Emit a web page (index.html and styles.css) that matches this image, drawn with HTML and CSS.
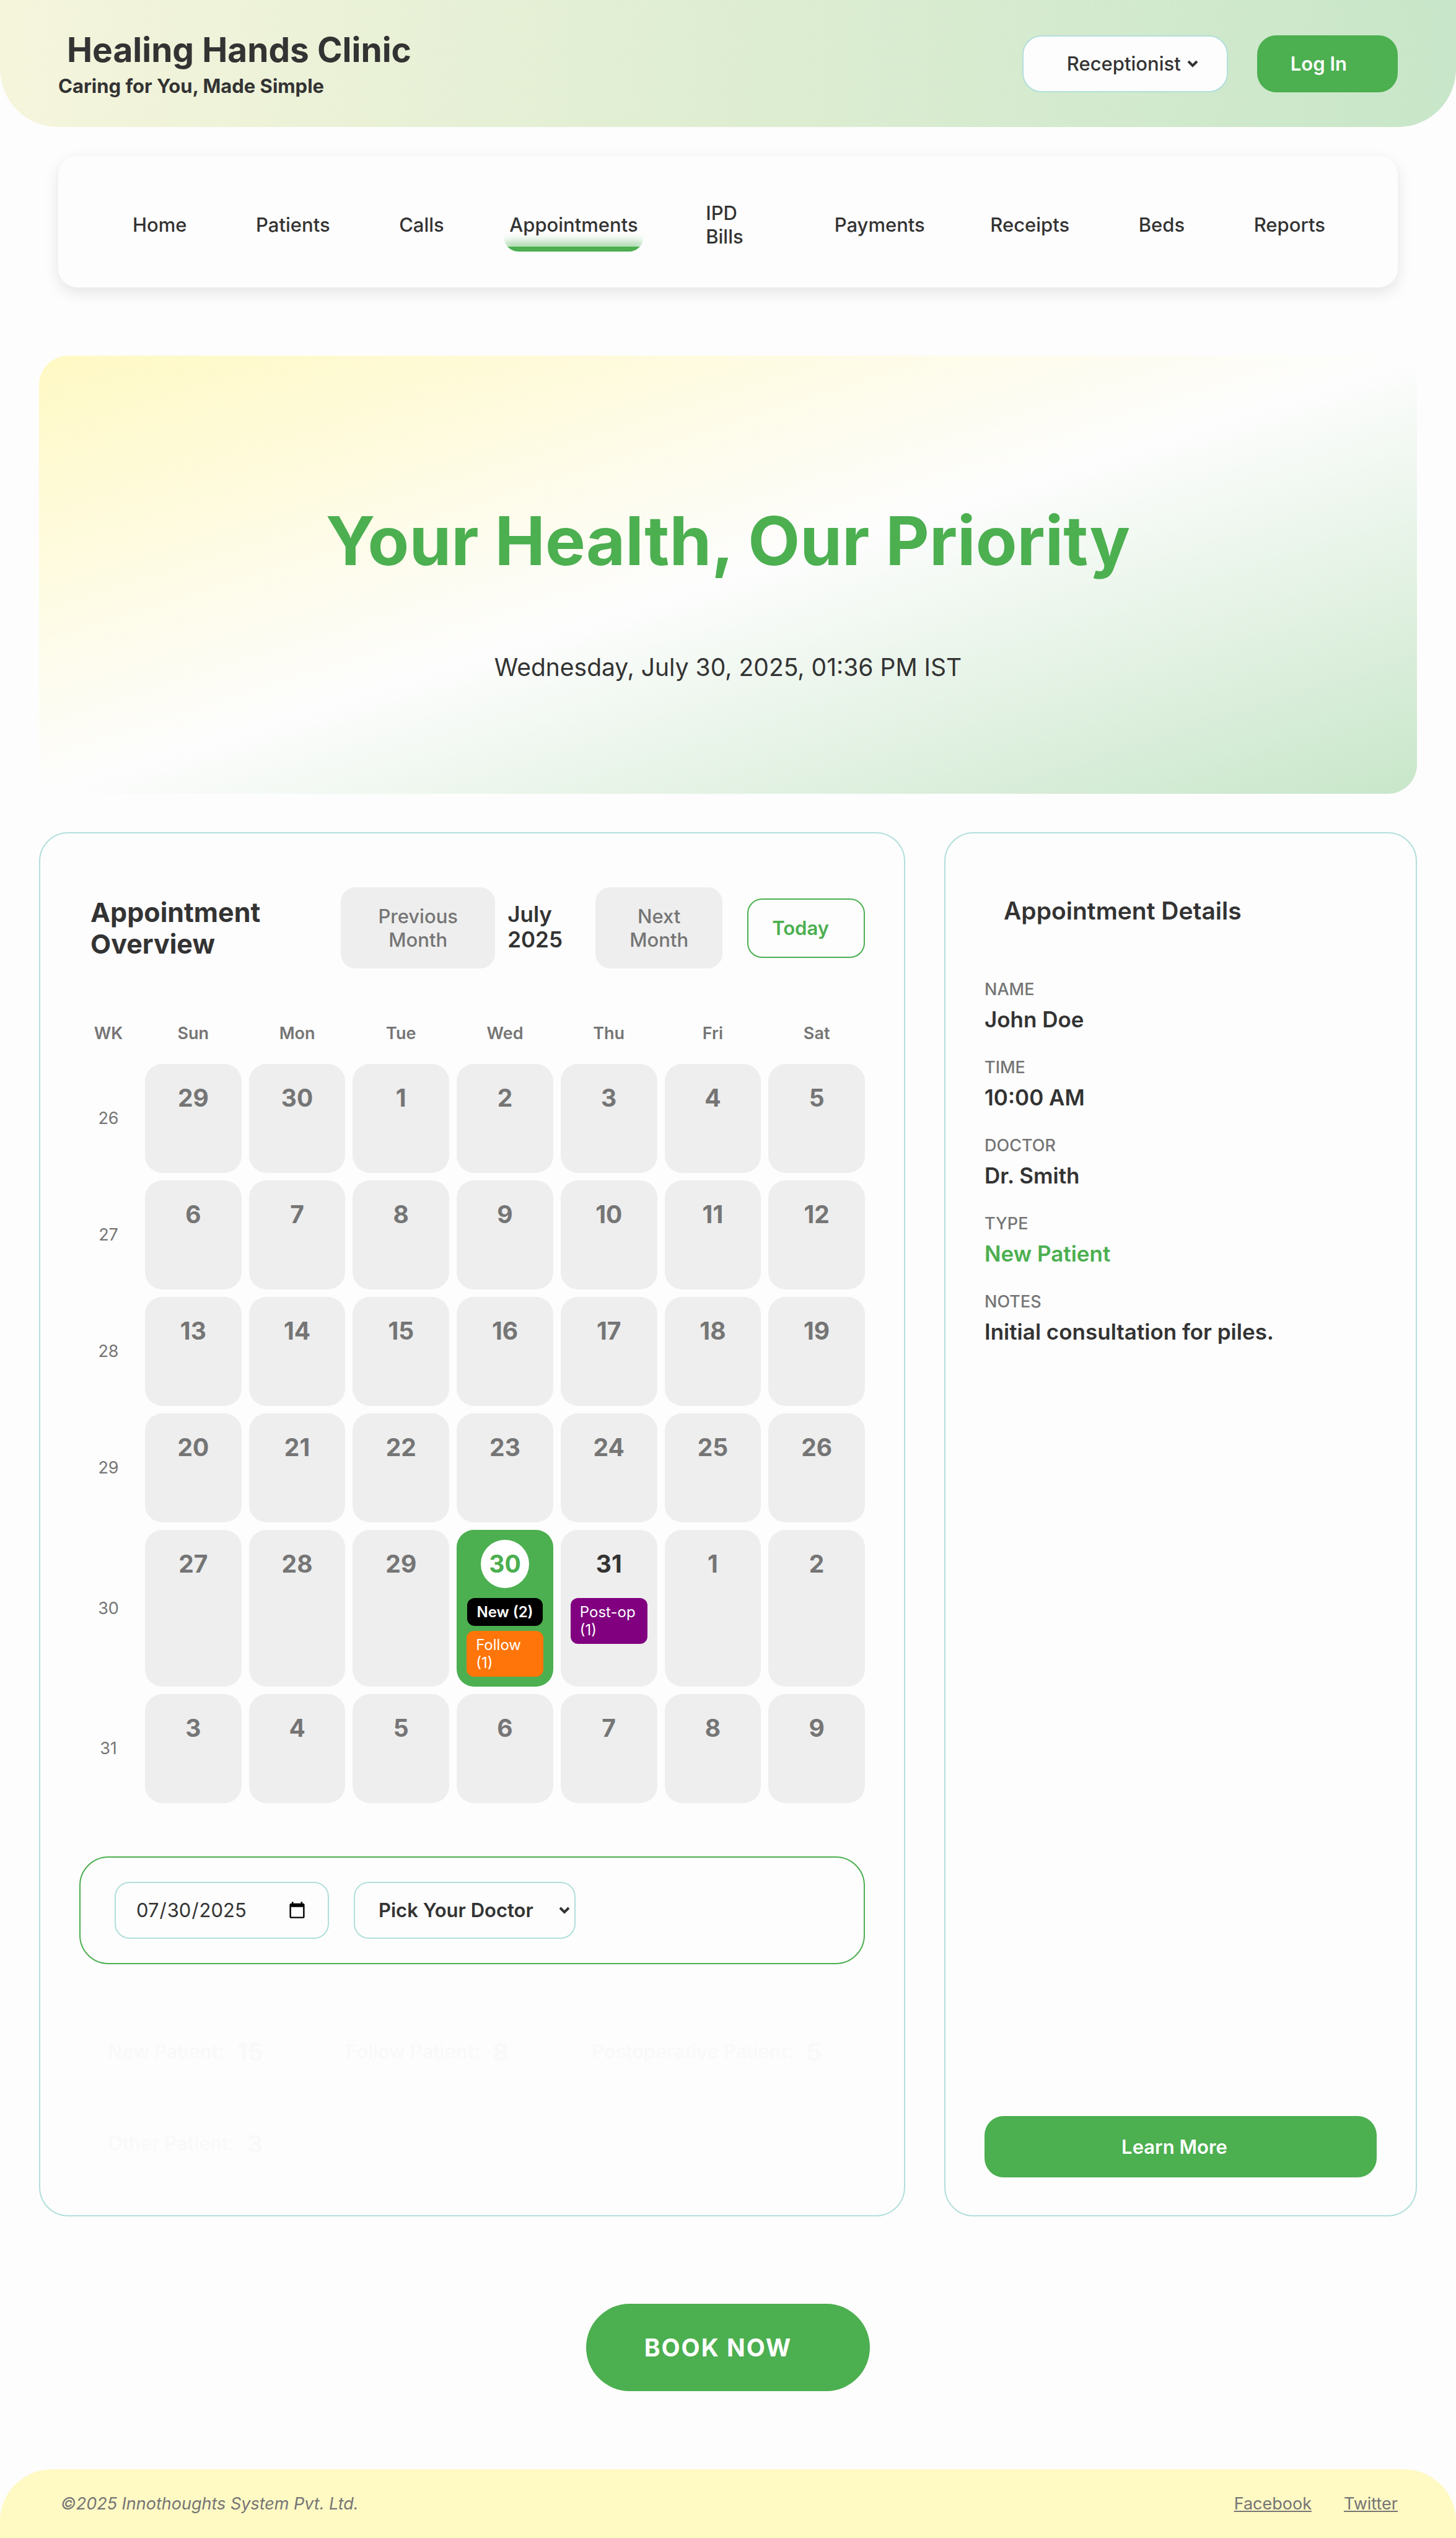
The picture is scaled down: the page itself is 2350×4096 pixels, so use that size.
FILE: index.html
```html
<!DOCTYPE html>
<html lang="en-US">
<head>
<meta charset="utf-8">
<title>Healing Hands Clinic</title>
<link rel="stylesheet" href="styles.css">
</head>
<body>
<header class="site-header">
  <div class="brand">
    <h1 class="brand-name">Healing Hands Clinic</h1>
    <p class="brand-tagline">Caring for You, Made Simple</p>
  </div>
  <div class="header-actions">
    <div class="select-wrap">
      <select class="role-select" aria-label="Role"><option>Receptionist</option></select>
      <svg class="chevron chevron-role" viewBox="0 0 18 12" aria-hidden="true"><path d="M2 2l7 7 7-7" fill="none" stroke="#333" stroke-width="4"/></svg>
    </div>
    <button class="btn login" type="button">Log In</button>
  </div>
</header>

<nav class="main-nav">
  <a class="nav-link" href="#home">Home</a>
  <a class="nav-link" href="#patients">Patients</a>
  <a class="nav-link" href="#calls">Calls</a>
  <a class="nav-link long active" href="#appointments">Appointments</a>
  <a class="nav-link two-line" href="#ipd">IPD Bills</a>
  <a class="nav-link long" href="#payments">Payments</a>
  <a class="nav-link" href="#receipts">Receipts</a>
  <a class="nav-link" href="#beds">Beds</a>
  <a class="nav-link" href="#reports">Reports</a>
</nav>

<main>
  <section class="hero">
    <h2 class="hero-title">Your Health, Our Priority</h2>
    <p class="hero-time">Wednesday, July 30, 2025, 01:36 PM IST</p>
  </section>

  <div class="panels">
    <section class="panel overview">
      <div class="overview-head">
        <h2 class="overview-title">Appointment Overview</h2>
        <div class="month-nav">
          <button class="btn month-btn prev" type="button">Previous Month</button>
          <span class="month-label">July 2025</span>
          <button class="btn month-btn next" type="button">Next Month</button>
        </div>
        <button class="btn today" type="button">Today</button>
      </div>

      <table class="calendar">
        <thead>
          <tr><th>WK</th><th>Sun</th><th>Mon</th><th>Tue</th><th>Wed</th><th>Thu</th><th>Fri</th><th>Sat</th></tr>
        </thead>
        <tbody>
          <tr><th>26</th><td><span class="num">29</span></td><td><span class="num">30</span></td><td><span class="num">1</span></td><td><span class="num">2</span></td><td><span class="num">3</span></td><td><span class="num">4</span></td><td><span class="num">5</span></td></tr>
          <tr><th>27</th><td><span class="num">6</span></td><td><span class="num">7</span></td><td><span class="num">8</span></td><td><span class="num">9</span></td><td><span class="num">10</span></td><td><span class="num">11</span></td><td><span class="num">12</span></td></tr>
          <tr><th>28</th><td><span class="num">13</span></td><td><span class="num">14</span></td><td><span class="num">15</span></td><td><span class="num">16</span></td><td><span class="num">17</span></td><td><span class="num">18</span></td><td><span class="num">19</span></td></tr>
          <tr><th>29</th><td><span class="num">20</span></td><td><span class="num">21</span></td><td><span class="num">22</span></td><td><span class="num">23</span></td><td><span class="num">24</span></td><td><span class="num">25</span></td><td><span class="num">26</span></td></tr>
          <tr><th>30</th><td><span class="num">27</span></td><td><span class="num">28</span></td><td><span class="num">29</span></td>
            <td class="is-today"><span class="num">30</span><div class="tags"><span class="tag new">New (2)</span><span class="tag follow">Follow (1)</span></div></td>
            <td class="upcoming"><span class="num">31</span><div class="tags"><span class="tag postop">Post-op (1)</span></div></td>
            <td><span class="num">1</span></td><td><span class="num">2</span></td></tr>
          <tr><th>31</th><td><span class="num">3</span></td><td><span class="num">4</span></td><td><span class="num">5</span></td><td><span class="num">6</span></td><td><span class="num">7</span></td><td><span class="num">8</span></td><td><span class="num">9</span></td></tr>
        </tbody>
      </table>

      <form class="filters">
        <input class="date-input" type="date" value="2025-07-30" aria-label="Date">
        <div class="select-wrap">
          <select class="doctor-select" aria-label="Doctor"><option>Pick Your Doctor</option></select>
          <svg class="chevron chevron-doctor" viewBox="0 0 18 12" aria-hidden="true"><path d="M2 2l7 7 7-7" fill="none" stroke="#333" stroke-width="4"/></svg>
        </div>
      </form>

      <ul class="stats">
        <li class="stat">New Patient: <strong class="stat-value">15</strong></li>
        <li class="stat">Follow Patient: <strong class="stat-value">8</strong></li>
        <li class="stat">Postoperative Patient: <strong class="stat-value">5</strong></li>
        <li class="stat">Other Patient: <strong class="stat-value">3</strong></li>
      </ul>
    </section>

    <aside class="panel details">
      <h2 class="details-title">Appointment Details</h2>
      <dl class="details-list">
        <div class="detail"><dt>NAME</dt><dd>John Doe</dd></div>
        <div class="detail"><dt>TIME</dt><dd>10:00 AM</dd></div>
        <div class="detail"><dt>DOCTOR</dt><dd>Dr. Smith</dd></div>
        <div class="detail"><dt>TYPE</dt><dd class="highlight">New Patient</dd></div>
        <div class="detail"><dt>NOTES</dt><dd>Initial consultation for piles.</dd></div>
      </dl>
      <button class="btn learn-more" type="button">Learn More</button>
    </aside>
  </div>

  <div class="cta">
    <button class="btn book-now" type="button">BOOK NOW</button>
  </div>
</main>

<footer class="site-footer">
  <p class="copyright">©2025 Innothoughts System Pvt. Ltd.</p>
  <div class="social">
    <a href="#facebook">Facebook</a>
    <a href="#twitter">Twitter</a>
  </div>
</footer>
</body>
</html>
```
FILE: styles.css
```css
:root {
  --green: #4caf50;
  --text: #333;
  --muted: #757575;
  --surface: #fdfdfd;
  --cell: #eee;
  --line: #b2dfdb;
}

* { box-sizing: border-box; }

body {
  margin: 0;
  min-height: 100vh;
  display: flex;
  flex-direction: column;
  background: var(--surface);
  color: var(--text);
  font-family: Inter, "Liberation Sans", sans-serif;
  font-size: 31px;
  line-height: 38px;
}

h1, h2, p, ul, dl, dd { margin: 0; padding: 0; }
button, input, select { font: inherit; color: inherit; margin: 0; }

.btn {
  border: 0;
  border-radius: 31px;
  background: var(--green);
  color: #fff;
  font-weight: 600;
}

.site-header {
  display: flex;
  align-items: center;
  justify-content: space-between;
  padding: 47px 94px;
  background: linear-gradient(90deg, #f5f5dc, #c8e6c9);
  border-radius: 0 0 94px 94px;
}
.brand-name {
  padding-left: 14px;
  font-size: 55px;
  line-height: 67px;
  font-weight: 700;
}
.brand-tagline { padding-top: 6px; font-weight: 700; }
.header-actions { display: flex; gap: 47px; }
.login { height: 92px; padding: 0 82px 0 54px; }

.select-wrap { position: relative; }
.select-wrap select {
  display: block;
  appearance: none;
  height: 92px;
  border: 2px solid var(--line);
  background: var(--surface);
}
.role-select {
  width: 332px;
  padding: 0 70px;
  border-radius: 31px;
  font-weight: 500;
}
.doctor-select {
  width: 358px;
  padding: 0 38px;
  border-radius: 24px;
  font-weight: 600;
}
.chevron {
  position: absolute;
  top: 40px;
  width: 18px;
  height: 12px;
  pointer-events: none;
}
.chevron-role { right: 48px; }
.chevron-doctor { right: 9px; }

.main-nav {
  display: flex;
  align-items: center;
  justify-content: space-between;
  margin: 47px 94px 0;
  padding: 68px 102px 58px 105px;
  min-height: 212px;
  border-radius: 31px;
  background: var(--surface);
  box-shadow: 0 8px 24px rgba(0, 0, 0, 0.1);
}
.nav-link {
  position: relative;
  overflow: hidden;
  padding: 24px 15px;
  border-radius: 24px;
  color: var(--text);
  font-weight: 500;
  text-decoration: none;
}
.long { padding: 24px 9px; }
.two-line { width: 136px; padding: 4px 19px; }
.active::after {
  content: "";
  position: absolute;
  left: 0;
  right: 0;
  bottom: 0;
  height: 8px;
  background: var(--green);
  box-shadow: 0 -4px 16px var(--green);
}

.hero {
  margin: 110px 63px 0;
  padding: 232px 63px 181px;
  border-radius: 47px;
  background: linear-gradient(to bottom right, #fff9c4, #fdfdfd, #c8e6c9);
  text-align: center;
}
.hero-title {
  font-size: 109px;
  line-height: 133px;
  font-weight: 700;
  color: var(--green);
}
.hero-time { margin-top: 114px; font-size: 39px; line-height: 47px; }

.panels {
  display: grid;
  grid-template-columns: 1398fr 763fr;
  gap: 63px;
  margin: 62px 63px 0;
}
.panel {
  display: flex;
  flex-direction: column;
  padding: 63px;
  border: 2px solid var(--line);
  border-radius: 47px;
}

.overview-head {
  display: flex;
  align-items: center;
  padding: 24px 0 0 18px;
}
.overview-title {
  flex: 1;
  padding-right: 80px;
  font-size: 43px;
  line-height: 51px;
  font-weight: 700;
}
.month-nav { display: flex; align-items: center; }
.month-btn {
  height: 131px;
  padding: 0 50px;
  border-radius: 24px;
  background: var(--cell);
  color: var(--muted);
  font-weight: 500;
}
.prev { width: 249px; }
.next { width: 205px; }
.month-label {
  width: 162px;
  padding: 0 50px 4px 20px;
  font-size: 35px;
  line-height: 41px;
  font-weight: 600;
}
.today {
  height: 96px;
  margin-left: 40px;
  padding: 0 56px 0 38px;
  border: 2px solid var(--green);
  border-radius: 24px;
  background: var(--surface);
  color: var(--green);
}

.calendar, .calendar thead { display: block; }
.calendar { margin-top: 86px; }
.calendar tbody { display: grid; gap: 12px; margin-top: 30px; }
.calendar tr {
  display: grid;
  grid-template-columns: 94px repeat(7, 1fr);
  gap: 12px;
}
.calendar th {
  align-self: center;
  padding: 0;
  font-size: 27px;
  line-height: 38px;
  color: var(--muted);
}
.calendar thead th { font-weight: 600; }
.calendar tbody th { font-weight: 400; }
.calendar td {
  display: flex;
  flex-direction: column;
  align-items: center;
  gap: 16px;
  min-height: 176px;
  padding: 16px;
  border-radius: 28px;
  background: var(--cell);
  color: var(--muted);
}
.num {
  width: 78px;
  height: 78px;
  border-radius: 50%;
  font-size: 39px;
  line-height: 78px;
  font-weight: 700;
  text-align: center;
}
.calendar .upcoming { color: var(--text); }
.calendar .is-today { background: var(--green); }
.is-today .num { background: #fff; color: var(--green); }
.tags {
  display: flex;
  flex-direction: column;
  align-items: center;
  gap: 8px;
}
.tag {
  padding: 8px 15px;
  border-radius: 12px;
  color: #fff;
  font-size: 24px;
  line-height: 29px;
}
.new { background: #000; font-weight: 600; white-space: nowrap; }
.follow { background: #ff750a; }
.postop { background: #800080; }

.filters {
  display: flex;
  gap: 40px;
  margin-top: 86px;
  padding: 39px 55px;
  border: 2px solid var(--green);
  border-radius: 47px;
}
.date-input {
  width: 346px;
  height: 92px;
  padding: 0 32px;
  border: 2px solid var(--line);
  border-radius: 24px;
  background: var(--surface);
}

.stats {
  display: flex;
  flex-wrap: wrap;
  gap: 38px 42px;
  margin-top: 86px;
  list-style: none;
  color: #f9f9f9;
}
.stat {
  display: flex;
  align-items: center;
  gap: 21px;
  height: 110px;
  padding: 0 46px;
  font-weight: 500;
}
.stat-value { font-size: 39px; line-height: 47px; font-weight: 700; }

.details, .overview { padding-bottom: 61px; }
.details-title {
  padding: 38px 31px 0;
  font-size: 39px;
  line-height: 47px;
  font-weight: 600;
}
.details-list { display: grid; gap: 37px; margin-top: 85px; }
dt { font-size: 27px; line-height: 38px; font-weight: 500; color: var(--muted); }
dd { margin-top: 8px; font-size: 35px; line-height: 43px; font-weight: 600; }
.highlight { color: var(--green); }
.learn-more { width: 100%; height: 99px; margin-top: auto; padding: 0 48px 0 28px; }

.cta { display: flex; justify-content: center; padding: 141px 63px 125px; }
.book-now {
  height: 141px;
  padding: 0 126px 0 94px;
  border-radius: 71px;
  font-size: 39px;
  font-weight: 700;
  letter-spacing: 2px;
}

.site-footer {
  display: flex;
  align-items: center;
  justify-content: space-between;
  margin-top: auto;
  min-height: 111px;
  padding: 0 94px 0 98px;
  border-radius: 84px 84px 0 0;
  background: #fff9c4;
  color: var(--muted);
  font-size: 27px;
}
.copyright { font-style: italic; }
.social { display: flex; gap: 52px; }
.social a { color: inherit; }
```
